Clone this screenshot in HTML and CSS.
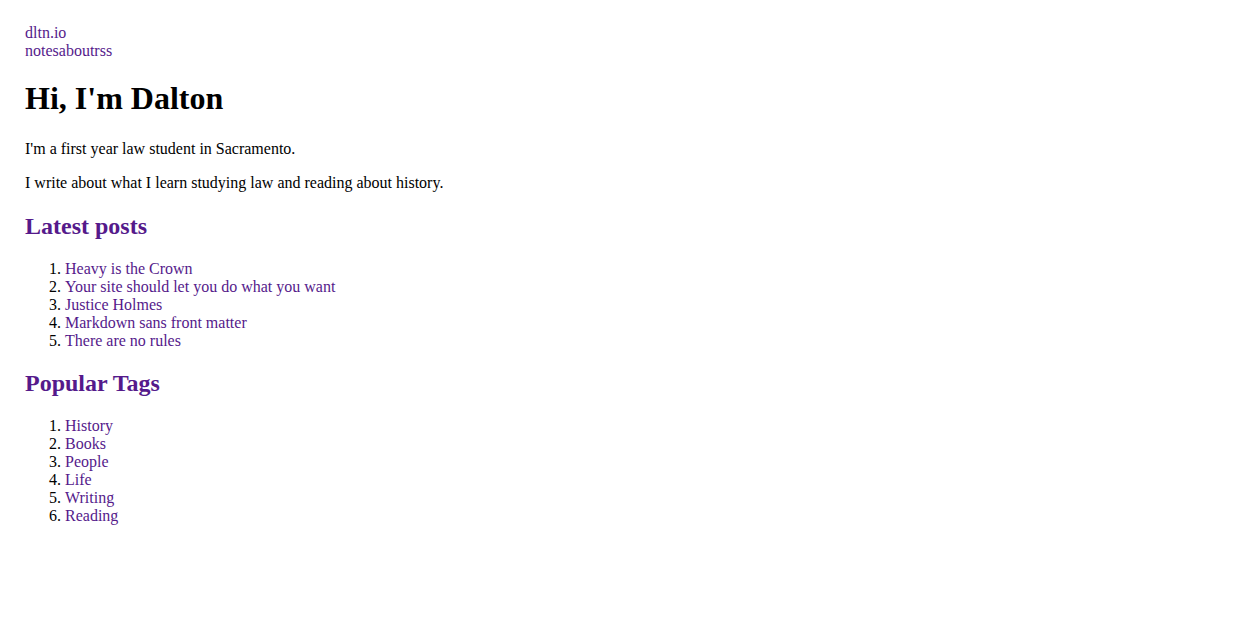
FILE: index.html
```html
<!DOCTYPE html>
<html>
<head>
<meta charset="utf-8">
<title>dltn.io</title>
<link rel="stylesheet" href="styles.css">
</head>
<body class="page">
<nav class="site-nav">
  <a class="nav-link" href="#">dltn.io</a>
  <a class="nav-link" href="#">notesaboutrss</a>
</nav>
<main class="content">
  <h1 class="title">Hi, I'm Dalton</h1>
  <p class="intro">I'm a first year law student in Sacramento.</p>
  <p class="intro">I write about what I learn studying law and reading about history.</p>
  <h2 class="section-title"><a class="link" href="#">Latest posts</a></h2>
  <ol class="list">
    <li><a class="link" href="#">Heavy is the Crown</a></li>
    <li><a class="link" href="#">Your site should let you do what you want</a></li>
    <li><a class="link" href="#">Justice Holmes</a></li>
    <li><a class="link" href="#">Markdown sans front matter</a></li>
    <li><a class="link" href="#">There are no rules</a></li>
  </ol>
  <h2 class="section-title"><a class="link" href="#">Popular Tags</a></h2>
  <ol class="list">
    <li><a class="link" href="#">History</a></li>
    <li><a class="link" href="#">Books</a></li>
    <li><a class="link" href="#">People</a></li>
    <li><a class="link" href="#">Life</a></li>
    <li><a class="link" href="#">Writing</a></li>
    <li><a class="link" href="#">Reading</a></li>
  </ol>
</main>
</body>
</html>
```

FILE: styles.css
```css
.page {
  margin: 0;
  padding: 24px 25px;
  font-family: "Liberation Serif", "Times New Roman", serif;
  font-size: 16px;
  color: #000;
  background: #fff;
}

.site-nav {
  display: flex;
  flex-direction: column;
  align-items: flex-start;
  line-height: 18px;
}

.nav-link,
.link {
  color: #551a8b;
  text-decoration: none;
}

.title {
  font-size: 32px;
  font-weight: bold;
  line-height: 37px;
  margin: 20px 0 23px;
}

.intro {
  margin: 16px 0;
  line-height: 18px;
}

.section-title {
  font-size: 24px;
  font-weight: bold;
  margin: 20px 0;
}

.intro + .section-title {
  margin-top: 21px;
}

.list {
  margin: 20px 0;
  padding-left: 40px;
  line-height: 18px;
}
```
